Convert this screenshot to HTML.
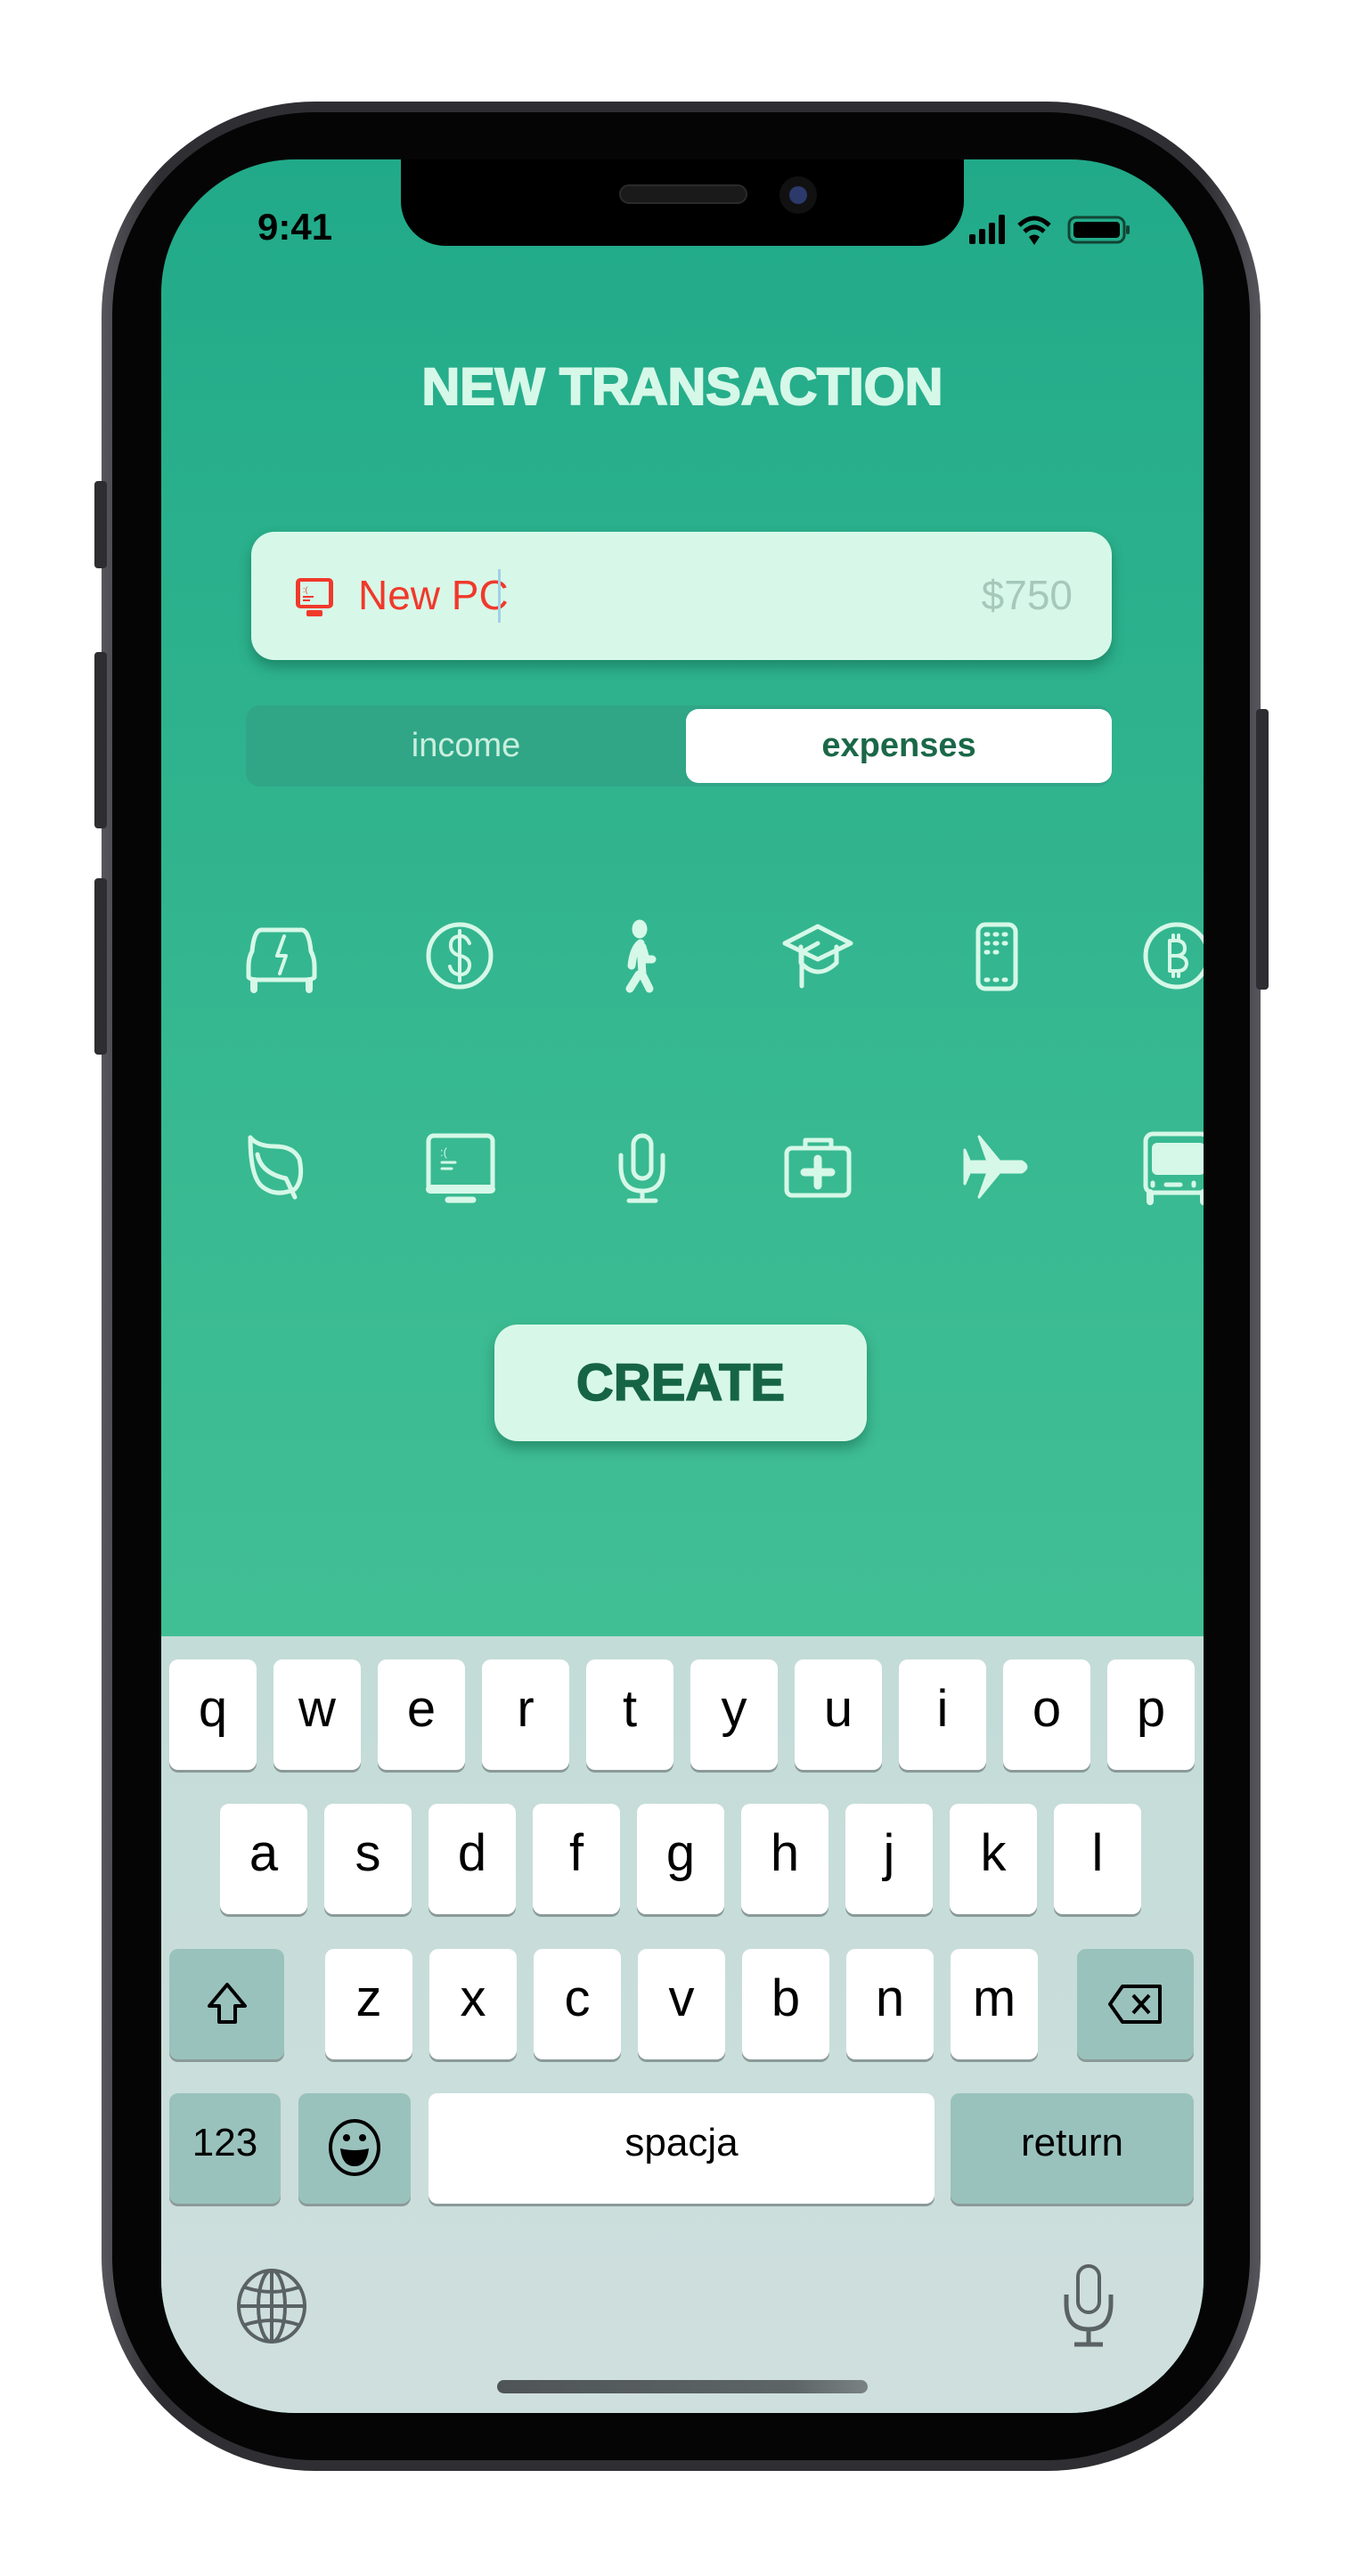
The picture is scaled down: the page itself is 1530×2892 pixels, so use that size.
<!DOCTYPE html>
<html><head><meta charset="utf-8"><style>
*{margin:0;padding:0;box-sizing:border-box}
body{width:1530px;height:2892px;background:#fff;position:relative;overflow:hidden;font-family:"Liberation Sans",sans-serif}
.abs{position:absolute}
.body{left:114px;top:114px;width:1301px;height:2660px;border-radius:240px;background:linear-gradient(90deg,#55555b,#2e2e33 5%,#2e2e33 95%,#55555b);}
.bezel{left:126px;top:126px;width:1277px;height:2636px;border-radius:228px;background:#050505}
.screen{left:181px;top:179px;width:1170px;height:2530px;border-radius:150px;overflow:hidden;background:linear-gradient(180deg,#21aa89 0%,#3bbb92 50%,#4dc49a 100%)}
.btn{background:#2d2d32;border-radius:4px}
.notch{left:269px;top:0;width:632px;height:97px;background:#000;border-radius:0 0 50px 50px}
.kb{left:0;top:1658px;width:1170px;height:872px;background:linear-gradient(180deg,#c3dcd8,#cfdfde)}
.k{position:absolute;width:98px;height:124px;background:#fff;border-radius:10px;box-shadow:0 3px 0 #8a9a98;font-size:58px;color:#000;text-align:center;line-height:112px}
.s{background:#9ac2bd}
</style></head><body>
<div class="abs body"></div>
<div class="abs btn" style="left:106px;top:540px;width:14px;height:98px"></div>
<div class="abs btn" style="left:106px;top:732px;width:14px;height:198px"></div>
<div class="abs btn" style="left:106px;top:986px;width:14px;height:198px"></div>
<div class="abs btn" style="left:1410px;top:796px;width:14px;height:315px"></div>
<div class="abs bezel"></div>
<div class="abs screen">
  <div class="abs notch"></div>
  <div class="abs" style="left:514px;top:28px;width:144px;height:22px;border-radius:11px;background:#1a1a1a;border:2px solid #2a2a2a"></div>
  <div class="abs" style="left:694px;top:19px;width:42px;height:42px;border-radius:50%;background:#111"><div style="margin:11px;width:20px;height:20px;border-radius:50%;background:#2b3a6a"></div></div>
  <div class="abs" style="left:108px;top:52px;font-size:42px;font-weight:bold;color:#000">9:41</div>
  <svg class="abs" style="left:905px;top:58px" width="200" height="40" viewBox="0 0 200 40">
    <rect x="2" y="26" width="7" height="11" rx="2"/><rect x="13" y="20" width="7" height="17" rx="2"/><rect x="24" y="13" width="7" height="24" rx="2"/><rect x="35" y="4" width="7" height="33" rx="2"/>
    <path d="M58 16 Q75 0 92 16" stroke="#000" stroke-width="5" fill="none"/><path d="M64 23 Q75 13 86 23" stroke="#000" stroke-width="5" fill="none"/><path d="M75 38 L69 29 Q75 24 81 29Z"/>
    <rect x="114" y="7" width="62" height="28" rx="8" stroke="#114433" stroke-width="3" fill="none"/><rect x="119" y="12" width="52" height="18" rx="4"/><rect x="178" y="16" width="4" height="10" rx="2" fill="#114433"/>
  </svg>
  <div class="abs" style="left:0;width:1170px;top:222px;text-align:center;font-size:58px;font-weight:900;color:#d6f8e8;-webkit-text-stroke:2px #d6f8e8;transform:scaleX(1.02)">NEW TRANSACTION</div>
  <div class="abs" style="left:101px;top:418px;width:966px;height:144px;border-radius:26px;background:#d7f8e8;box-shadow:0 8px 14px rgba(0,60,40,.35)">
    <svg class="abs" style="left:48px;top:50px" width="46" height="46" viewBox="0 0 46 46"><rect x="2" y="2" width="42" height="34" rx="5" fill="#f0392b"/><rect x="7" y="6" width="32" height="26" fill="#d7f8e8"/><rect x="10" y="22" width="12" height="2" fill="#f0392b"/><rect x="10" y="26" width="8" height="2" fill="#f0392b"/><text x="10" y="18" font-size="9" fill="#f0392b">:(</text><rect x="14" y="38" width="18" height="7" rx="2" fill="#f0392b"/></svg>
    <div class="abs" style="left:120px;top:44px;font-size:46px;color:#f0392b">New PC</div>
    <div class="abs" style="left:277px;top:42px;width:3px;height:60px;background:#9fd0e8"></div>
    <div class="abs" style="right:44px;top:44px;font-size:46px;color:#a6c8bb">$750</div>
  </div>
  <div class="abs" style="left:95px;top:613px;width:972px;height:91px;border-radius:16px;background:#30a687"></div>
  <div class="abs" style="left:95px;top:613px;width:494px;height:91px;text-align:center;line-height:91px;font-size:38px;color:#c9efdd">income</div>
  <div class="abs" style="left:589px;top:617px;width:478px;height:83px;border-radius:14px;background:#fff;text-align:center;line-height:83px;font-size:38px;color:#1a6848;font-weight:bold">expenses</div>

  <svg class="abs" style="left:0;top:0" width="1170" height="1400" fill="none" stroke="#d6f8e8" stroke-width="5" stroke-linecap="round" stroke-linejoin="round">
    <!-- car -->
    <path d="M102 889 Q104 866 112 865 H158 Q166 866 168 889 Q172 896 172 906 V918 Q170 921 160 921 H110 Q100 921 98 918 V906 Q98 896 102 889Z"/><path d="M104 922 V932 M166 922 V932" stroke-width="8"/><path d="M138 872 L130 894 H140 L133 914" stroke-width="4"/>
    <!-- dollar -->
    <circle cx="335" cy="894" r="35"/><path d="M346 880 Q342 871 335 872 Q324 873 325 884 Q326 892 336 894 Q347 897 346 906 Q344 916 334 915 Q326 914 324 906 M335 866 V922" stroke-width="4"/>
    <!-- walker -->
    <ellipse cx="537" cy="864" rx="6" ry="8" fill="#d6f8e8"/><path d="M538 880 Q530 886 528 905 M538 880 L540 915 L548 931 M536 915 L526 931 M540 884 L544 898 L551 898" stroke-width="9"/>
    <!-- grad cap -->
    <path d="M737 861 L774 880 L737 898 L700 880Z"/><path d="M718 884 V902 Q737 922 758 902 V884"/><path d="M737 880 L719 890 V928"/>
    <!-- phone -->
    <rect x="917" y="859" width="42" height="72" rx="8"/><path d="M926 870 h2 m8 0 h2 m8 0 h2 M926 880 h2 m8 0 h2 m8 0 h2 M926 890 h2 m8 0 h2 M926 921 h2 m8 0 h2 m8 0 h2" stroke-width="5"/>
    <!-- bitcoin -->
    <circle cx="1140" cy="894" r="35"/><path d="M1132 877 V911 M1132 877 H1141 Q1149 878 1149 886 Q1149 893 1140 894 H1132 M1140 894 Q1151 895 1151 903 Q1150 911 1141 911 H1132 M1136 871 V877 M1142 871 V877 M1136 911 V917 M1142 911 V917" stroke-width="4"/>
    <!-- leaf -->
    <path d="M100 1098 Q100 1140 112 1152 Q128 1166 150 1156 Q160 1145 155 1122 Q148 1108 128 1108 Q108 1108 100 1098Z"/><path d="M108 1117 Q112 1138 140 1144 L150 1165"/>
    <!-- monitor -->
    <rect x="300" y="1096" width="72" height="62" rx="6"/><path d="M302 1156 H370" stroke-width="10"/><path d="M322 1168 H350" stroke-width="7"/><path d="M315 1126 H330 M315 1133 H326" stroke-width="3"/><text x="313" y="1119" font-size="13" fill="#d6f8e8" stroke="none">:(</text>
    <!-- mic -->
    <rect x="530" y="1096" width="20" height="48" rx="10"/><path d="M516 1118 V1132 Q517 1158 540 1158 Q563 1158 563 1132 V1118 M540 1158 V1168 M525 1169 H555"/>
    <!-- medkit -->
    <rect x="702" y="1110" width="70" height="53" rx="6"/><path d="M723 1110 V1101 H752 V1110"/><path d="M737 1122 V1152 M722 1137 H752" stroke-width="9"/>
    <!-- plane -->
    <path d="M910 1125 H966 Q976 1131 966 1137 H910Z M918 1097 L946 1131 L918 1165 L930 1131Z M902 1112 L910 1131 L902 1150Z" fill="#d6f8e8" stroke-width="3"/>
    <!-- bus -->
    <rect x="1105" y="1094" width="70" height="66" rx="8"/><rect x="1112" y="1104" width="60" height="36" rx="6" fill="#d6f8e8" stroke="none"/><path d="M1110 1160 V1170 M1170 1160 V1170" stroke-width="8"/><path d="M1113 1149 v3 M1159 1149 v3 M1128 1151 H1144" stroke-width="5"/>
  </svg>

  <div class="abs" style="left:374px;top:1308px;width:418px;height:131px;border-radius:26px;background:#d7f8e8;box-shadow:0 8px 14px rgba(0,60,40,.35);text-align:center;line-height:131px;font-size:58px;font-weight:900;-webkit-text-stroke:1.5px #166446;color:#166446">CREATE</div>

  <div class="abs kb">
    <div class="k" style="left:9px;top:26px">q</div><div class="k" style="left:126px;top:26px">w</div><div class="k" style="left:243px;top:26px">e</div><div class="k" style="left:360px;top:26px">r</div><div class="k" style="left:477px;top:26px">t</div><div class="k" style="left:594px;top:26px">y</div><div class="k" style="left:711px;top:26px">u</div><div class="k" style="left:828px;top:26px">i</div><div class="k" style="left:945px;top:26px">o</div><div class="k" style="left:1062px;top:26px">p</div>
    <div class="k" style="left:66px;top:188px">a</div><div class="k" style="left:183px;top:188px">s</div><div class="k" style="left:300px;top:188px">d</div><div class="k" style="left:417px;top:188px">f</div><div class="k" style="left:534px;top:188px">g</div><div class="k" style="left:651px;top:188px">h</div><div class="k" style="left:768px;top:188px">j</div><div class="k" style="left:885px;top:188px">k</div><div class="k" style="left:1002px;top:188px">l</div>
    <div class="k s" style="left:9px;top:351px;width:129px"><svg width="60" height="60" viewBox="0 0 60 60" style="margin-top:32px"><path d="M30 8 L50 32 H39 V50 H21 V32 H10Z" fill="none" stroke="#000" stroke-width="4" stroke-linejoin="round"/></svg></div>
    <div class="k" style="left:184px;top:351px">z</div><div class="k" style="left:301px;top:351px">x</div><div class="k" style="left:418px;top:351px">c</div><div class="k" style="left:535px;top:351px">v</div><div class="k" style="left:652px;top:351px">b</div><div class="k" style="left:769px;top:351px">n</div><div class="k" style="left:886px;top:351px">m</div>
    <div class="k s" style="left:1028px;top:351px;width:131px"><svg width="70" height="60" viewBox="0 0 70 60" style="margin-top:32px"><path d="M20 10 H62 V50 H20 L6 30Z" fill="none" stroke="#000" stroke-width="4" stroke-linejoin="round"/><path d="M32 20 L50 40 M50 20 L32 40" stroke="#000" stroke-width="4"/></svg></div>
    <div class="k s" style="left:9px;top:513px;width:125px;font-size:44px">123</div>
    <div class="k s" style="left:154px;top:513px;width:126px"><svg width="60" height="66" viewBox="0 0 60 66" style="margin-top:28px"><ellipse cx="30" cy="33" rx="27" ry="30" fill="none" stroke="#000" stroke-width="4"/><circle cx="21" cy="22" r="4"/><circle cx="39" cy="22" r="4"/><path d="M14 34 Q30 38 46 34 Q44 54 30 54 Q16 54 14 34Z"/></svg></div>
    <div class="k" style="left:300px;top:513px;width:568px;font-size:44px">spacja</div>
    <div class="k s" style="left:886px;top:513px;width:273px;font-size:44px">return</div>
    <svg class="abs" style="left:84px;top:709px" width="80" height="86" viewBox="0 0 80 86" fill="none" stroke="#5a6266" stroke-width="4"><ellipse cx="40" cy="43" rx="37" ry="40"/><ellipse cx="40" cy="43" rx="15" ry="40"/><path d="M40 3 V83 M3 43 H77 M10 22 Q40 32 70 22 M10 64 Q40 54 70 64"/></svg>
    <svg class="abs" style="left:1011px;top:704px" width="60" height="96" viewBox="0 0 60 96" fill="none" stroke="#5a6266" stroke-width="4"><rect x="18" y="3" width="24" height="52" rx="12"/><path d="M5 35 V45 Q5 74 30 74 Q55 74 55 45 V35 M30 74 V90 M14 91 H46" stroke-width="5"/></svg>
    <div class="abs" style="left:377px;top:835px;width:416px;height:15px;border-radius:8px;background:linear-gradient(90deg,#4f5557,#5e6567 80%,#7a8284)"></div>
  </div>
</div>
</body></html>
